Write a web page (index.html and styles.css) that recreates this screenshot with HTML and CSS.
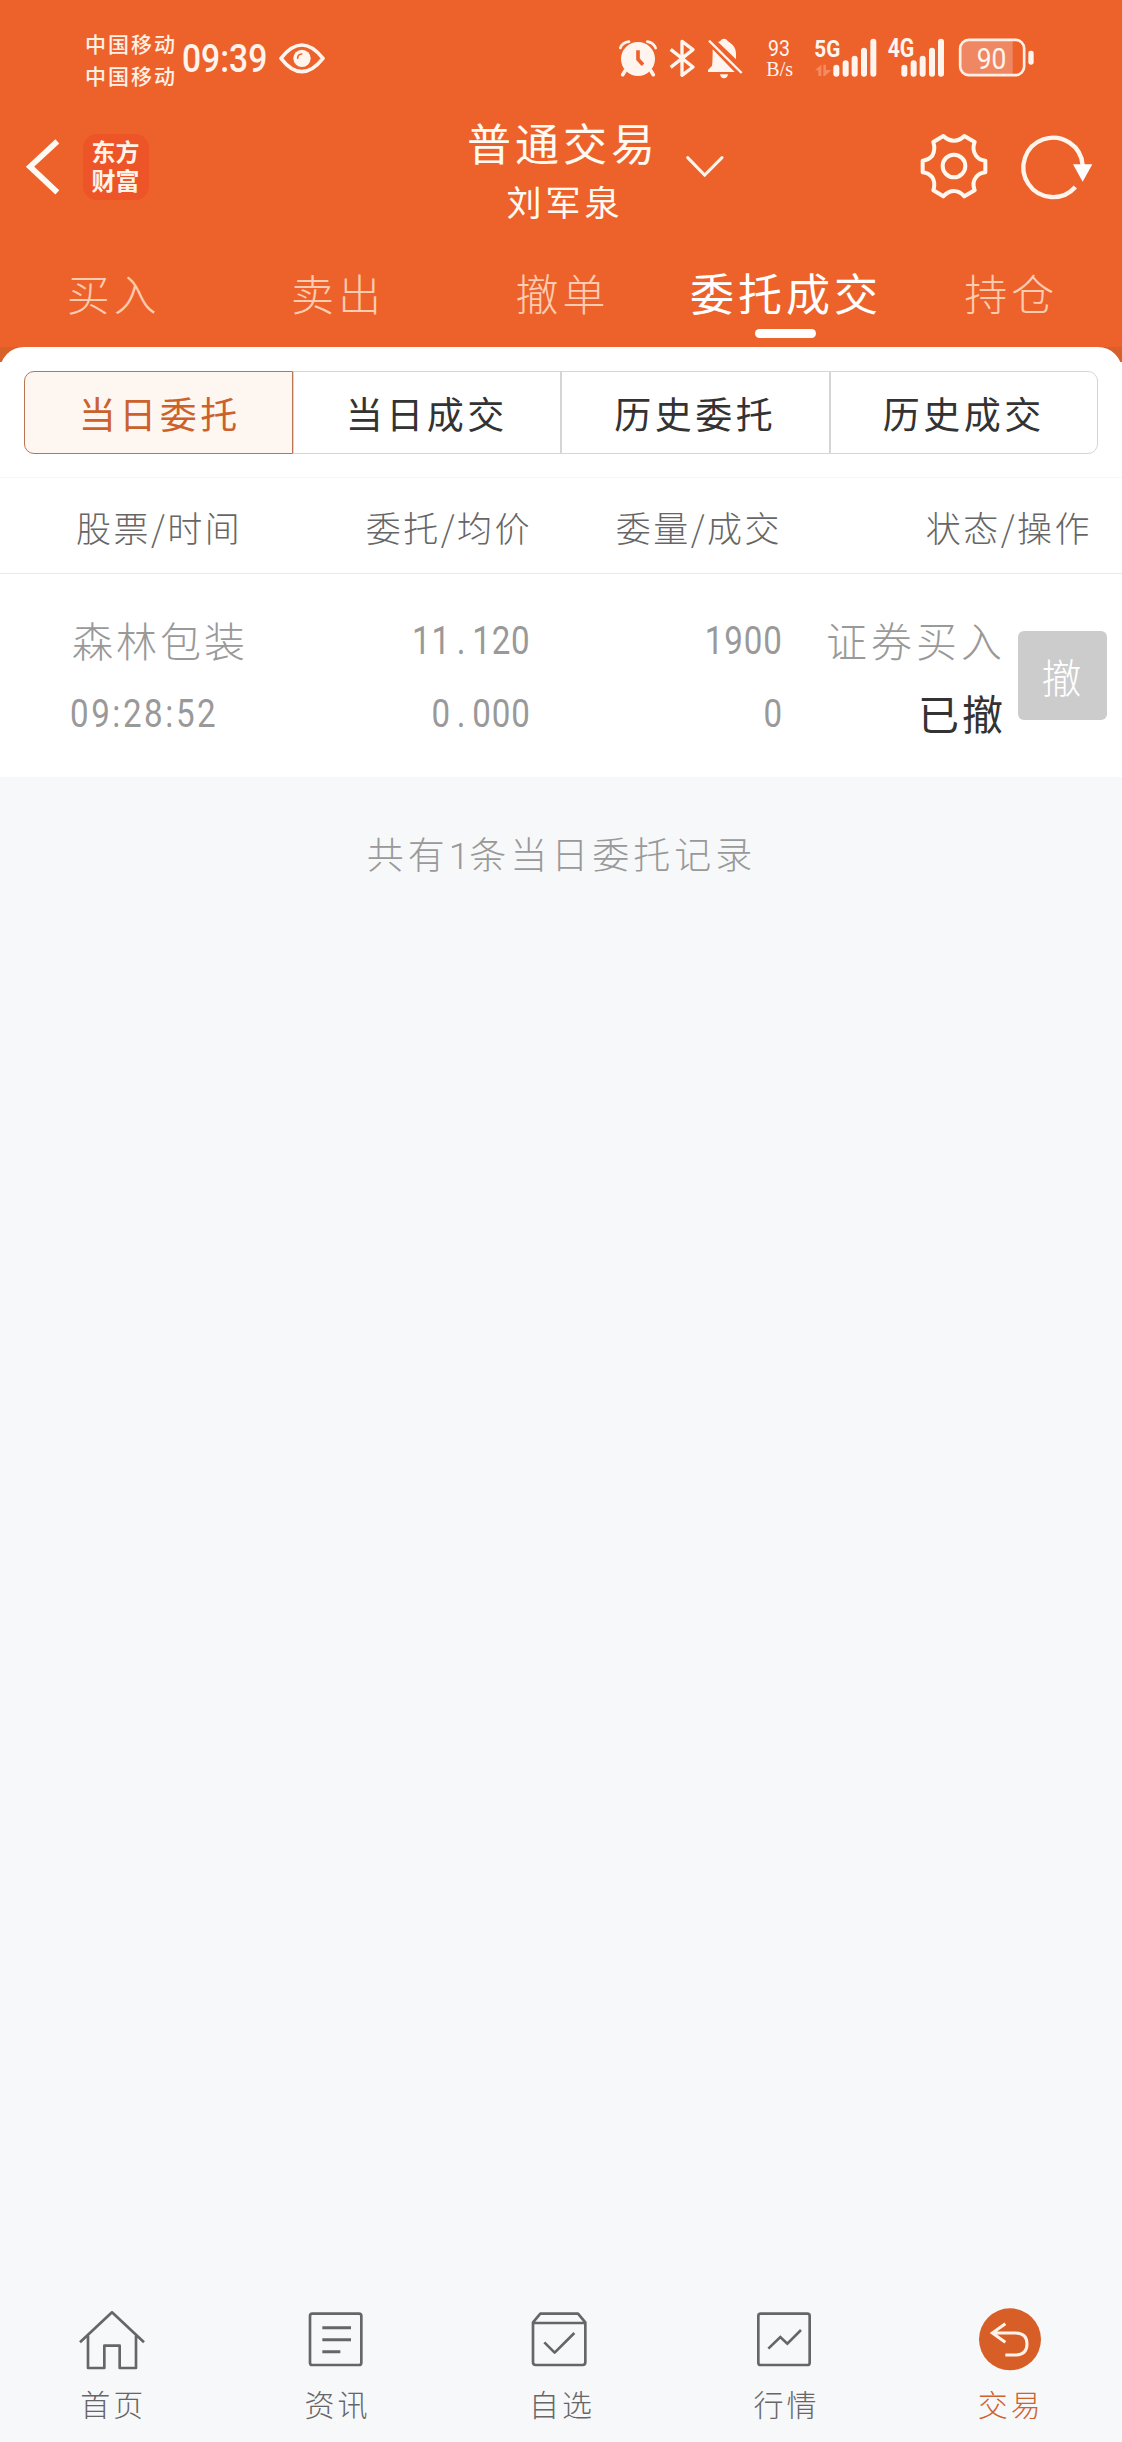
FILE: index.html
```html
<!DOCTYPE html>
<html lang="zh-CN">
<head>
<meta charset="utf-8">
<title>普通交易</title>
<link rel="stylesheet" href="styles.css">
</head>
<body>
<div class="screen">
  <header class="top">
    <div class="status">
      <div class="carriers"><span>中国移动</span><span>中国移动</span></div>
      <svg class="clock" width="90" height="46" viewBox="540 105 270 138"><text x="546" y="217" font-size="117" textLength="256" lengthAdjust="spacingAndGlyphs">09:39</text></svg>
      <svg class="eye" width="46" height="46" viewBox="837 105 138 138"><path d="M843 175Q905 95 969 175Q905 255 843 175Z" fill="none" stroke="#fff5ee" stroke-width="11" stroke-linejoin="round"/><circle cx="906" cy="175" r="26" fill="#fff5ee"/><path d="M893 175Q893 163 905 162" fill="none" stroke="#ed622b" stroke-width="5" stroke-linecap="round"/></svg>
      <div class="indicators">
        <svg width="38" height="46" viewBox="57 105 114 138"><circle cx="114" cy="177" r="51" fill="#fff5ee"/><path d="M61 144Q67 127 87 125M142 125Q160 128 167 144" fill="none" stroke="#fff5ee" stroke-width="8" stroke-linecap="round"/><path d="M75 213L68 224M153 213L160 224" stroke="#fff5ee" stroke-width="11" stroke-linecap="round"/><path d="M114 151V178L129 194" fill="none" stroke="#ed622b" stroke-width="11" stroke-linejoin="round"/></svg>
        <svg class="bluetooth" width="27" height="46" viewBox="207 105 81 138"><path d="M212 148L279 201L246 226V124L279 149L212 202" fill="none" stroke="#fff5ee" stroke-width="10" stroke-linejoin="round"/></svg>
        <svg class="bell" width="36" height="46" viewBox="320 105 108 138"><path d="M353 126Q360 124 363 119Q371 113 379 119Q382 124 389 128Q407 140 407 160V178ZM337 148L403 216H323V210L335 197Q337 185 337 148ZM359 223H383Q381 235 371 235Q361 235 359 223Z" fill="#fff5ee"/><path d="M326 122L424 219" stroke="#fff5ee" stroke-width="7"/></svg>
        <svg class="speed" width="30" height="46" viewBox="495 105 90 138"><text x="504" y="167" font-size="64" textLength="66" lengthAdjust="spacingAndGlyphs">93</text><text x="499" y="227" font-size="61" textLength="80" lengthAdjust="spacingAndGlyphs">B/s</text></svg>
        <svg class="sig5" width="64" height="46" viewBox="642 105 192 138"><text class="gen" x="643" y="170" font-size="73" textLength="78" lengthAdjust="spacingAndGlyphs">5G</text><path d="M645 211L664 194V228H655V211ZM670 194H678V210H694L675 228H670Z" fill="#f58a62"/><path d="M709 203V221M737 190V221M764 176V221M792 152V221M820 125V221" stroke="#fff5ee" stroke-width="18" stroke-linecap="round"/></svg>
        <svg class="sig4" width="59" height="46" viewBox="861 105 177 138"><text class="gen" x="863" y="171" font-size="75" textLength="80" lengthAdjust="spacingAndGlyphs">4G</text><path d="M913 203V221M941 190V221M968 176V221M996 152V221M1023 125V221" stroke="#fff5ee" stroke-width="18" stroke-linecap="round"/></svg>
        <svg class="battery" width="77" height="46" viewBox="1075 105 231 138"><path d="M1103 120H1239V226H1103Q1081 226 1081 204V142Q1081 120 1103 120Z" fill="#ef8862"/><rect x="1081.500" y="119.500" width="192" height="106" rx="26" fill="none" stroke="#fff0e7" stroke-width="8"/><rect x="1286" y="152" width="16" height="42" rx="7" fill="#fff5ee"/><text x="1131" y="206" font-size="91" textLength="89" lengthAdjust="spacingAndGlyphs">90</text></svg>
      </div>
    </div>
    <div class="titlebar">
      <div class="side left">
        <svg width="36" height="66" viewBox="72 402 108 198"><path d="M172 424L90 500L172 577" fill="none" stroke="#fffaf4" stroke-width="17"/></svg>
        <div class="logo"><span>东方</span><span>财富</span></div>
      </div>
      <div class="account">
        <div class="title">普通交易<svg class="chevron" width="38" height="22" viewBox="937 163 114 66"><path d="M942 171L993 223L1045 171" fill="none" stroke="#fff5ec" stroke-width="9" stroke-linecap="round"/></svg></div>
        <div class="name">刘军泉</div>
      </div>
      <div class="side right">
        <svg width="72" height="72" viewBox="509 89 216 216"><path d="M585 107Q600 121 617 121Q634 121 648 107L679 125Q670 147 683 166Q693 180 711 181V216Q693 218 683 231Q670 247 679 270L648 288Q634 272 617 272Q600 272 585 288L555 270Q562 247 552 231Q541 218 523 216V181Q541 179 552 166Q562 147 555 125Z" fill="none" stroke="#fff8ee" stroke-width="12" stroke-linejoin="round"/><circle cx="617" cy="197" r="34" fill="none" stroke="#fff8ee" stroke-width="12"/></svg>
        <svg class="refresh" width="72" height="72" viewBox="818 89 216 216"><path d="M981 260A89 89 0 1 1 1003 195" fill="none" stroke="#fff5ec" stroke-width="13"/><path d="M974 192H1032L1003 244Z" fill="#fff"/></svg>
      </div>
    </div>
    <nav class="tabs">
      <a>买入</a><a>卖出</a><a>撤单</a><a class="on">委托成交</a><a>持仓</a>
    </nav>
  </header>
  <main class="sheet">
    <div class="panel">
      <div class="segments"><a class="on">当日委托</a><a>当日成交</a><a>历史委托</a><a>历史成交</a></div>
      <div class="thead"><span>股票/时间</span><span>委托/均价</span><span>委量/成交</span><span>状态/操作</span></div>
      <div class="order">
        <div class="cell stock"><span class="cn">森林包装</span><span class="num time">09:28:52</span></div>
        <div class="cell"><span class="num">11<i>.</i>120</span><span class="num">0<i>.</i>000</span></div>
        <div class="cell"><span class="num">1900</span><span class="num">0</span></div>
        <div class="cell state"><span class="cn wide">证券买入</span><span class="cn done">已撤</span></div>
        <button class="cancel">撤</button>
      </div>
    </div>
  </main>
  <p class="summary">共有<span class="one">1</span>条当日委托记录</p>
  <nav class="bottom">
    <a><svg width="72" height="72" viewBox="227 102 216 216"><path d="M239 217L335 127L431 217M263 197V294H312V227H358V294H407V197" fill="none" stroke="#666" stroke-width="8" stroke-linejoin="round"/></svg>首页</a>
    <a><svg width="72" height="72" viewBox="902 102 216 216"><rect x="929" y="131" width="154" height="154" rx="7" fill="none" stroke="#666" stroke-width="8"/><path d="M966 173H1052M966 209H1052M966 245H1020" stroke="#666" stroke-width="9"/></svg>资讯</a>
    <a><svg width="72" height="72" viewBox="375 102 216 216"><path d="M399 157L421 131H534L556 157V277Q556 285 548 285H407Q399 285 399 277ZM399 159H556M433 217L464 248L523 189" fill="none" stroke="#666" stroke-width="8" stroke-linejoin="round"/></svg>自选</a>
    <a><svg width="72" height="72" viewBox="1048 102 216 216"><rect x="1076" y="131" width="154" height="154" rx="7" fill="none" stroke="#666" stroke-width="8"/><path d="M1106 236L1142 201L1163 221L1204 180" fill="none" stroke="#666" stroke-width="8"/></svg>行情</a>
    <a class="on"><svg width="72" height="72" viewBox="401 102 216 216"><circle cx="509" cy="208" r="93" fill="#d75f27"/><path d="M495 161L456 189L495 217M456 189H524Q560 189 560 222Q560 255 524 255H495" fill="none" stroke="#fff3e9" stroke-width="9"/></svg>交易</a>
  </nav>
</div>
</body>
</html>
```
FILE: styles.css
```css
* { box-sizing: border-box; }
body { margin: 0; background: #f7f8fa; font-family: "Noto Sans CJK SC", sans-serif; font-weight: 300; }
.screen { width: 1122px; height: 2442px; display: flex; flex-direction: column; }
svg { display: block; flex: none; overflow: visible; }
svg text { font-family: Roboto, sans-serif; font-weight: 400; fill: #fff5ee; }
svg .gen { font-weight: 700; }
.clock text { font-weight: 500; }

.top { height: 347px; background: #ed622b; color: #fffaf2; }
.status { height: 116px; padding: 35px 87px 0 85px; display: flex; align-items: flex-start; }
.carriers { width: 95px; display: flex; flex-direction: column; margin-top: -8px; font-size: 21px; line-height: 32px; letter-spacing: 2px; font-weight: 500; color: #fff0e5; }
.eye { margin-left: 9px; }
.indicators { display: flex; margin-left: auto; }
.bluetooth { margin-left: 12px; }
.bell { margin-left: 11px; }
.speed { margin-left: 22px; }
.speed text:last-child { font-family: "Liberation Serif", serif; }
.sig5 { margin-left: 19px; }
.sig4 { margin-left: 9px; }
.battery { margin-left: 12px; }

.titlebar { height: 131px; display: grid; grid-template-columns: 1fr auto 1fr; }
.side { display: flex; align-items: flex-start; }
.left { padding: 18px 0 0 24px; }
.right { justify-content: flex-end; padding: 14px 29px 0 0; }
.refresh { margin-left: 31px; }
.logo { width: 66px; height: 66px; margin-left: 23px; padding: 2px 1px 0 0; border-radius: 14px; background: #ed5428; display: flex; flex-direction: column; align-items: center; font-size: 24px; line-height: 29px; font-weight: 700; color: #fff3e8; }
.account { display: flex; flex-direction: column; align-items: center; }
.title { position: relative; height: 58px; padding-left: 4px; line-height: 53px; font-size: 44px; letter-spacing: 4px; font-weight: 400; }
.chevron { position: absolute; left: 223px; top: 39px; }
.name { padding-left: 8px; font-size: 35px; line-height: 53px; letter-spacing: 4px; font-weight: 400; }

.tabs { height: 100px; display: grid; grid-template-columns: repeat(5, 1fr); }
.tabs a { display: flex; flex-direction: column; align-items: center; font-size: 43px; line-height: 90px; letter-spacing: 4px; text-indent: 3px; color: #fccbb0; }
.tabs .on { color: #fff; text-indent: 1px; font-size: 44px; font-weight: 400; }
.tabs .on::after { content: ""; width: 61px; height: 9px; margin-top: -8px; border-radius: 5px; background: #fff; }

.sheet { background: linear-gradient(#d8602a 15px, #fff 15px); }
.panel { height: 430px; border-radius: 24px 24px 0 0; background: #fff; }
.segments { height: 131px; padding: 24px 24px 23px; display: grid; grid-template-columns: repeat(4, 1fr); border-bottom: 1px solid #f6f6f7; }
.segments a { height: 83px; padding-top: 2px; border: 1px solid #d5d5d8; text-align: center; font-size: 37px; line-height: 79px; letter-spacing: 3.5px; color: #333; font-weight: 400; }
.segments a:first-child { border-radius: 10px 0 0 10px; }
.segments a:last-child { border-radius: 0 10px 10px 0; }
.segments .on { color: #cc612c; background: #fdf6f1; border-color: #b97551; text-indent: 3px; }
.thead { height: 96px; padding: 1px 30px 0 76px; display: grid; grid-template-columns: 164px 292px 250px 310px; border-bottom: 1px solid #e9e9eb; font-size: 35px; line-height: 96px; letter-spacing: 2.5px; color: #666; text-align: right; white-space: nowrap; }
.thead span { height: 94px; }
.thead span:first-child { text-align: left; }
.order { height: 203px; padding: 31px 15px 0 70px; display: grid; grid-template-columns: 170px 291px 252px 223px 1fr; color: #999; }
.cell { display: flex; flex-direction: column; align-items: flex-end; line-height: 73px; }
.stock { align-items: flex-start; }
.cn { position: relative; top: -2px; font-size: 41px; letter-spacing: 3px; height: 73px; white-space: nowrap; padding-left: 2px; }
.wide { letter-spacing: 4px; }
.done { color: #333; font-weight: 400; }
.num { height: 73px; font-family: Roboto, sans-serif; font-size: 39px; font-weight: 400; letter-spacing: 1px; transform: scaleX(.85); transform-origin: right; }
.num i { font-style: normal; display: inline-block; width: 25px; text-align: center; }
.time { transform-origin: left; letter-spacing: 3px; }
.cancel { justify-self: end; width: 89px; height: 89px; margin-top: 26px; padding: 2px 2px 0 0; border: 0; border-radius: 6px; background: #ccc; color: #fff; font: 300 40px/85px "Noto Sans CJK SC", sans-serif; }

.summary { margin: 48px 0 0; text-align: center; text-indent: 1px; font-size: 37px; line-height: 56px; letter-spacing: 4px; color: #999; }
.one { font-family: Roboto, sans-serif; letter-spacing: 0; }
.bottom { margin-top: auto; height: 138px; display: grid; grid-template-columns: repeat(5, 1fr); }
.bottom a { display: flex; flex-direction: column; align-items: center; font-size: 30px; line-height: 54px; letter-spacing: 3px; text-indent: 2px; color: #666; }
.bottom .on { color: #cf6330; }
```
